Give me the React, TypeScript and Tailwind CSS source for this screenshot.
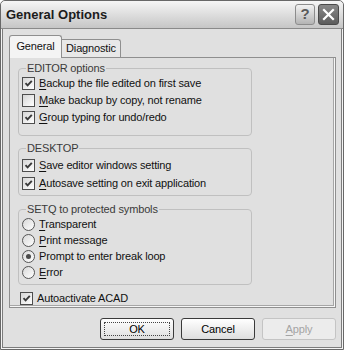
import React from "react";

type Opt = { label: string; checked?: boolean; u?: boolean };

function Text({ label, u }: { label: string; u?: boolean }) {
  if (!u) return <span>{label}</span>;
  return (
    <span>
      <span className="underline underline-offset-[2px]">{label[0]}</span>
      {label.slice(1)}
    </span>
  );
}

function CheckRow({ label, checked, u, h = "h-[17px]" }: Opt & { h?: string }) {
  return (
    <div className={`flex items-center gap-[4px] pl-[3px] ${h}`}>
      <div className="w-[13px] h-[13px] border border-[#4d4d4d] bg-gradient-to-br from-[#d6d6d6] to-white flex items-center justify-center shrink-0">
        {checked && (
          <svg width="11" height="11" viewBox="0 0 11 11">
            <path d="M2.5 5.2 L4.6 7.4 L8.8 2.8" fill="none" stroke="#3a3a3a" strokeWidth="1.9" />
          </svg>
        )}
      </div>
      <Text label={label} u={u} />
    </div>
  );
}

function RadioRow({ label, checked, u }: Opt) {
  return (
    <div className="flex items-center gap-[4px] pl-[3px] h-[16px]">
      <div className="w-[13px] h-[13px] rounded-full border border-[#555] bg-gradient-to-br from-[#d8d8d8] to-white flex items-center justify-center shrink-0">
        {checked && <div className="w-[5px] h-[5px] rounded-full bg-[#4a4a4a]" />}
      </div>
      <Text label={label} u={u} />
    </div>
  );
}

function Group({ title, className, children }: { title: string; className: string; children: React.ReactNode }) {
  return (
    <fieldset className={`w-[234px] border border-[#c0c0c0] rounded-[4px] ${className}`}>
      <legend className="ml-[7px] px-[1px] leading-[13px] text-[#3a3a3a]">{title}</legend>
      {children}
    </fieldset>
  );
}

function Btn({ label, u, focus, disabled }: { label: string; u?: boolean; focus?: boolean; disabled?: boolean }) {
  const base = disabled
    ? "border-[#c4c4c4] text-[#a4a4a4] bg-[#ececec]"
    : "border-[#3a3a3a] text-black bg-gradient-to-b from-white to-[#dedede]";
  return (
    <div className={`w-[74px] h-[22px] rounded-[3px] border p-[3px] ${base}`}>
      <div className={`w-full h-full flex items-center justify-center border border-dotted ${focus ? "border-[#444]" : "border-transparent"}`}>
        <Text label={label} u={u} />
      </div>
    </div>
  );
}

export default function App() {
  return (
    <div className="w-[344px] h-[350px] border border-[#686868] rounded-t-[5px] bg-[#e0e0e0] flex flex-col font-['Liberation_Sans',Arial,sans-serif] text-[11px] tracking-[-0.15px] text-[#111] overflow-hidden">
      {/* title bar */}
      <div className="h-[28px] shrink-0 border-b border-[#8a8a8a] bg-gradient-to-b from-[#f6f6f6] to-[#c6c6c6] rounded-t-[4px] flex items-center pl-[5px] pr-[4px]">
        <div className="flex-1 font-bold text-[13px] tracking-normal text-[#1c1c1c]">General Options</div>
        <div className="flex gap-[3px]">
          <div className="w-[20px] h-[21px] rounded-[3px] border border-[#8c8c8c] bg-gradient-to-b from-[#f2f2f2] to-[#b4b4b4] flex items-center justify-center text-[15px] font-bold text-[#5a5a5a] tracking-normal">
            ?
          </div>
          <div className="w-[21px] h-[21px] rounded-[3px] border border-[#4a4a4a] bg-gradient-to-b from-[#8a8a8a] to-[#5c5c5c] flex items-center justify-center">
            <svg width="13" height="13" viewBox="0 0 13 13">
              <path d="M2 2 L11 11 M11 2 L2 11" stroke="white" strokeWidth="2.2" strokeLinecap="square" />
            </svg>
          </div>
        </div>
      </div>

      {/* body with inner frame */}
      <div className="flex-1 flex flex-col border-x border-b border-[#f4f4f4]">
        <div className="flex-1 flex flex-col border-x border-b border-[#7c7c7c]">
          {/* tabs */}
          <div className="h-[28px] shrink-0 flex items-end pl-[6px]">
            <div className="relative z-10 -mb-px h-[23px] w-[53px] border border-b-0 border-[#8f8f8f] rounded-t-[3px] bg-[#f4f4f4] flex items-center justify-center pb-[1px]">
              General
            </div>
            <div className="h-[18px] w-[59px] border border-l-0 border-b-0 border-[#8f8f8f] rounded-tr-[3px] bg-[#e8e8e8] flex items-center justify-center">
              Diagnostic
            </div>
          </div>

          {/* panel */}
          <div className="ml-[6px] mr-[5px] h-[251px] shrink-0 border border-[#8f8f8f] bg-[#e0e0e0] shadow-[inset_-1px_-1px_0_#f6f6f6,inset_-2px_-2px_0_#a6a6a6] pl-[8px] pt-[4px]">
            <Group title="EDITOR options" className="pb-[9px]">
              <CheckRow label="Backup the file edited on first save" checked u />
              <CheckRow label="Make backup by copy, not rename" u />
              <CheckRow label="Group typing for undo/redo" checked u />
            </Group>
            <Group title="DESKTOP" className="mt-[6px] pt-[1px] pb-[3px]">
              <CheckRow label="Save editor windows setting" checked u h="h-[18px]" />
              <CheckRow label="Autosave setting on exit application" checked u h="h-[18px]" />
            </Group>
            <Group title="SETQ to protected symbols" className="mt-[7px] pb-[4px]">
              <RadioRow label="Transparent" u />
              <RadioRow label="Print message" u />
              <RadioRow label="Prompt to enter break loop" checked />
              <RadioRow label="Error" u />
            </Group>
            <div className="mt-[5px] -ml-[1px]">
              <CheckRow label="Autoactivate ACAD" checked h="h-[16px]" />
            </div>
          </div>

          {/* buttons */}
          <div className="mt-[10px] pr-[5px] flex justify-end gap-[7px]">
            <Btn label="OK" focus />
            <Btn label="Cancel" />
            <Btn label="Apply" u disabled />
          </div>
        </div>
      </div>
    </div>
  );
}
